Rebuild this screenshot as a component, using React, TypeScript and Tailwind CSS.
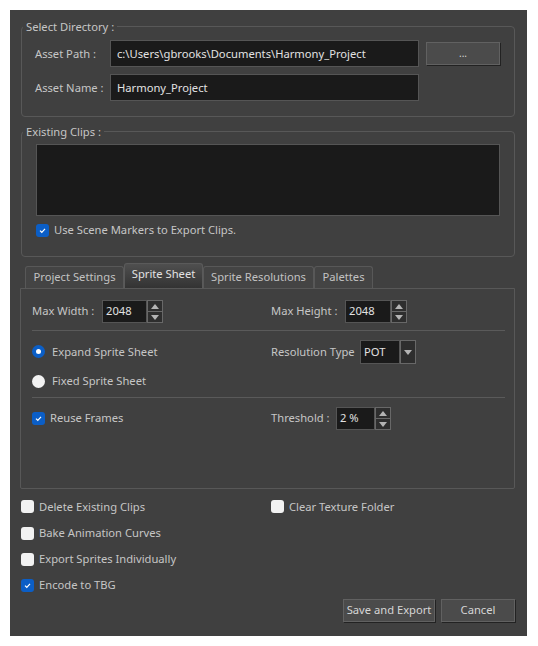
import React from 'react';

const font = { fontFamily: "'Noto Sans', 'Open Sans', sans-serif" };

function Check({ checked }: { checked?: boolean }) {
  if (checked) {
    return (
      <span className="w-[13px] h-[13px] rounded-[3px] bg-[#0b5ec6] flex items-center justify-center shrink-0">
        <svg width="9" height="9" viewBox="0 0 9 9">
          <path d="M2 4.6 L3.8 6.3 L7 2.8" fill="none" stroke="#ffffff" strokeWidth="1.2" />
        </svg>
      </span>
    );
  }
  return <span className="w-[13px] h-[13px] rounded-[3px] bg-[#f2f2f2] shrink-0" />;
}

function Radio({ checked }: { checked?: boolean }) {
  if (checked) {
    return (
      <span className="w-[13px] h-[13px] rounded-full bg-[#0b5ec6] flex items-center justify-center shrink-0">
        <span className="w-[5px] h-[5px] rounded-full bg-white" />
      </span>
    );
  }
  return <span className="w-[13px] h-[13px] rounded-full bg-[#f2f2f2] shrink-0" />;
}

function Arrow({ up }: { up?: boolean }) {
  return (
    <svg width="8" height="5" viewBox="0 0 8 5">
      {up ? <polygon points="0,5 8,5 4,0" fill="#b4b4b4" /> : <polygon points="0,0 8,0 4,5" fill="#b4b4b4" />}
    </svg>
  );
}

function Spin({ value, w }: { value: string; w: string }) {
  return (
    <div className="flex h-[23px]">
      <div className={`${w} h-full bg-[#1a1a1a] border border-[#555] text-[#e2e2e2] flex items-center pl-[3px]`}>{value}</div>
      <div className="w-[16px] h-full flex flex-col">
        <div className="flex-1 bg-[#2e2e2e] border border-[#686868] flex items-center justify-center"><Arrow up /></div>
        <div className="flex-1 bg-[#2e2e2e] border border-[#686868] border-t-0 flex items-center justify-center"><Arrow /></div>
      </div>
    </div>
  );
}

function Group({ title, children, className }: { title: string; children: React.ReactNode; className?: string }) {
  return (
    <fieldset className={`border border-[#585858] rounded-[4px] p-0 ml-[11px] mr-[12px] ${className ?? ''}`}>
      <legend className="ml-[1px] px-[3px] leading-[16px] text-[#c6c6c6] relative top-[1px]">{title}</legend>
      {children}
    </fieldset>
  );
}

function Btn({ children, w }: { children: React.ReactNode; w: string }) {
  return (
    <div className={`${w} h-[23px] bg-[#4b4b4b] border border-[#616161] shadow-[1px_1px_0_#222] flex items-center justify-center text-[#d6d6d6]`}>
      {children}
    </div>
  );
}

function Tab({ label, w, active }: { label: string; w: string; active?: boolean }) {
  if (active) {
    return (
      <div className={`${w} h-[25px] rounded-t-[3px] border border-b-0 border-[#5a5a5a] bg-gradient-to-b from-[#4f4f4f] to-[#333] text-[#e2e2e2] flex items-center justify-center pb-[3px]`}>
        {label}
      </div>
    );
  }
  return (
    <div className={`${w} h-[22px] rounded-t-[3px] border border-b-0 border-[#585858] bg-[#444] text-[#c2c2c2] flex items-center justify-center`}>
      {label}
    </div>
  );
}

export default function App() {
  return (
    <div className="w-[538px] h-[646px] bg-white pt-[10px] pl-[10px] text-[11.2px] whitespace-nowrap" style={font}>
      <div className="w-[517px] h-[626px] bg-[#404040] flex flex-col pt-[8px] text-[#c6c6c6]">
        <Group title="Select Directory :">
          <div className="pt-[6px] pb-[15px] pl-[13px] flex flex-col gap-[7px]">
            <div className="flex items-center">
              <span className="w-[75px] pt-[2px]">Asset Path :</span>
              <div className="w-[309px] h-[27px] bg-[#1a1a1a] border border-[#555] text-[#e2e2e2] flex items-center pl-[6px] pt-[2px]">
                c:\Users\gbrooks\Documents\Harmony_Project
              </div>
              <div className="ml-[7px]">
                <Btn w="w-[74px]"><span className="text-[10px] leading-none pb-[2px]">...</span></Btn>
              </div>
            </div>
            <div className="flex items-center">
              <span className="w-[75px] pt-[2px]">Asset Name :</span>
              <div className="w-[309px] h-[27px] bg-[#1a1a1a] border border-[#555] text-[#e2e2e2] flex items-center pl-[6px] pt-[2px]">
                Harmony_Project
              </div>
            </div>
          </div>
        </Group>

        <Group title="Existing Clips :" className="mt-[6px]">
          <div className="pt-[5px] pb-[18px] pl-[14px]">
            <div className="w-[464px] h-[72px] bg-[#1a1a1a] border border-[#555]" />
            <div className="mt-[6px] h-[16px] flex items-center gap-[5px]">
              <Check checked />
              <span>Use Scene Markers to Export Clips.</span>
            </div>
          </div>
        </Group>

        <div className="mt-[6px] ml-[15px] flex items-end h-[25px]">
          <Tab label="Project Settings" w="w-[99px]" />
          <Tab label="Sprite Sheet" w="w-[79px]" active />
          <Tab label="Sprite Resolutions" w="w-[111px]" />
          <Tab label="Palettes" w="w-[59px]" />
        </div>

        <div className="ml-[10px] w-[495px] h-[201px] border border-[#585858] rounded-b-[2px] pt-[11px] px-[11px]">
          <div className="flex h-[23px] items-center">
            <div className="w-[239px] flex items-center">
              <span className="w-[70px]">Max Width :</span>
              <Spin value="2048" w="w-[45px]" />
            </div>
            <div className="flex items-center">
              <span className="w-[74px]">Max Height :</span>
              <Spin value="2048" w="w-[46px]" />
            </div>
          </div>
          <div className="mt-[7px] h-px bg-[#5a5a5a] w-[473px]" />
          <div className="mt-[9px] flex h-[24px] items-center">
            <div className="w-[239px] flex items-center gap-[7px]">
              <Radio checked />
              <span>Expand Sprite Sheet</span>
            </div>
            <div className="flex items-center">
              <span className="w-[89px]">Resolution Type</span>
              <div className="flex h-[24px]">
                <div className="w-[40px] h-full bg-[#1a1a1a] border border-[#555] text-[#e2e2e2] flex items-center pl-[3px]">POT</div>
                <div className="w-[16px] h-full bg-[#2e2e2e] border border-[#686868] flex items-center justify-center"><Arrow /></div>
              </div>
            </div>
          </div>
          <div className="mt-[9px] h-[16px] flex items-center gap-[7px]">
            <Radio />
            <span>Fixed Sprite Sheet</span>
          </div>
          <div className="mt-[8px] h-px bg-[#5a5a5a] w-[473px]" />
          <div className="mt-[9px] flex h-[23px] items-center">
            <div className="w-[239px] flex items-center gap-[5px]">
              <Check checked />
              <span>Reuse Frames</span>
            </div>
            <div className="flex items-center">
              <span className="w-[65px]">Threshold :</span>
              <Spin value="2 %" w="w-[39px]" />
            </div>
          </div>
        </div>

        <div className="mt-[5px] ml-[11px] flex flex-col">
          <div className="h-[26px] flex items-center">
            <div className="w-[250px] flex items-center gap-[5px]">
              <Check />
              <span>Delete Existing Clips</span>
            </div>
            <div className="flex items-center gap-[5px]">
              <Check />
              <span>Clear Texture Folder</span>
            </div>
          </div>
          <div className="h-[26px] flex items-center gap-[5px]">
            <Check />
            <span>Bake Animation Curves</span>
          </div>
          <div className="h-[26px] flex items-center gap-[5px]">
            <Check />
            <span>Export Sprites Individually</span>
          </div>
          <div className="h-[26px] flex items-center gap-[5px]">
            <Check checked />
            <span>Encode to TBG</span>
          </div>
        </div>

        <div className="mt-[1px] mr-[12px] flex justify-end gap-[6px]">
          <Btn w="w-[92px]">Save and Export</Btn>
          <Btn w="w-[74px]">Cancel</Btn>
        </div>
      </div>
    </div>
  );
}
